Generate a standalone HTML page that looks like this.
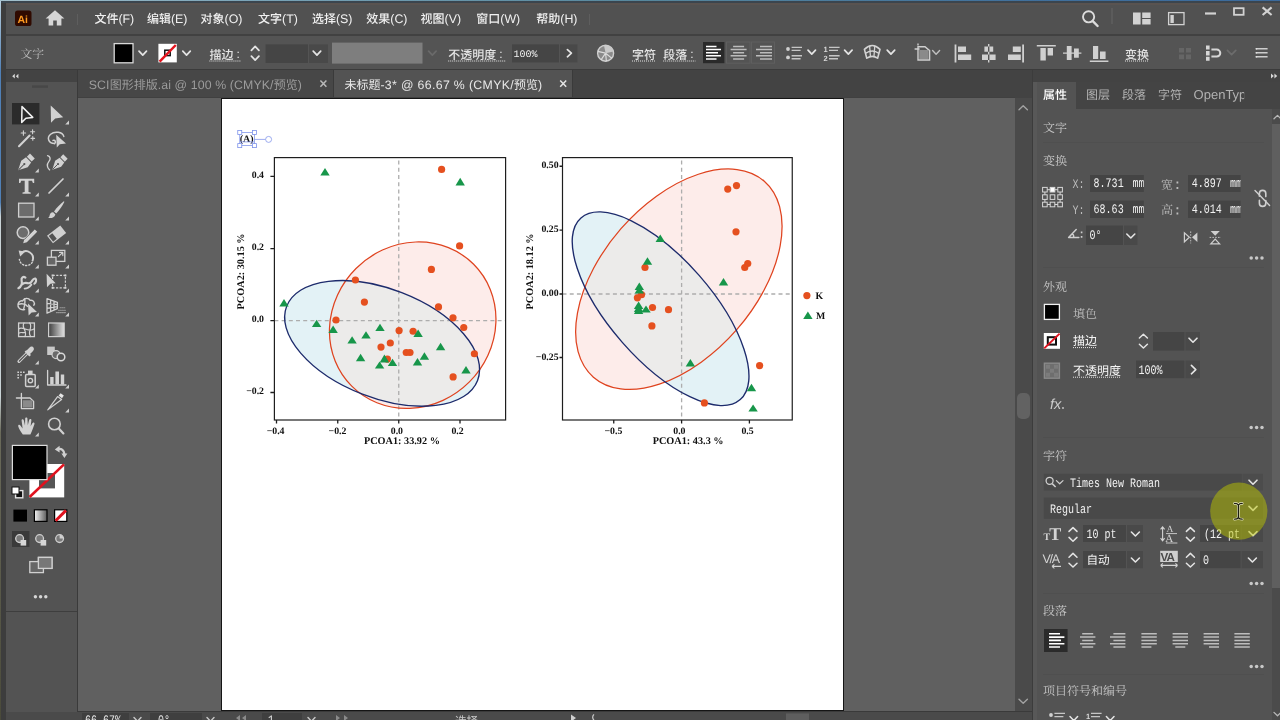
<!DOCTYPE html>
<html lang="zh"><head><meta charset="utf-8"><title>Adobe Illustrator</title>
<style>
html,body{margin:0;padding:0;background:#535353;}
body{width:1280px;height:720px;overflow:hidden;position:relative;font-family:"Liberation Sans",sans-serif;font-size:12px;color:#e6e6e6;}
.a{position:absolute;}
.t{position:absolute;white-space:nowrap;line-height:1;}
.m{font-family:"Liberation Mono",monospace;}

</style></head><body>
<div class="a" style="left:0px;top:0px;width:1280px;height:1.3px;background:linear-gradient(90deg,#a3c0cc 0%,#7aa3b6 20%,#57879c 50%,#41709c 80%,#3c6a9c 100%);"></div>
<div class="a" style="left:0px;top:1.3px;width:1280px;height:1.3px;background:#3b454e;"></div>
<div class="a" style="left:0px;top:2.6px;width:1280px;height:2.4px;background:#595350;"></div>
<div class="a" style="left:0px;top:5px;width:1280px;height:29px;background:#515151;"></div>
<div class="a" style="left:0px;top:34px;width:1280px;height:2px;background:#414141;"></div>
<div class="a" style="left:0px;top:36px;width:1280px;height:33px;background:#545454;"></div>
<div class="a" style="left:0px;top:69px;width:1280px;height:1px;background:#3b3b3b;"></div>
<div class="a" style="left:0px;top:70px;width:1280px;height:28px;background:#434343;"></div>
<div class="a" style="left:6px;top:82px;width:71px;height:630px;background:#535353;"></div>
<div class="a" style="left:6px;top:611px;width:71px;height:1px;background:#3e3e3e;"></div>
<div class="a" style="left:77px;top:70px;width:1px;height:642px;background:#3a3a3a;"></div>
<div class="a" style="left:78px;top:70px;width:255px;height:27px;background:#474747;"></div>
<div class="a" style="left:333px;top:70px;width:1px;height:27px;background:#3a3a3a;"></div>
<div class="a" style="left:334px;top:70px;width:238px;height:28px;background:#535353;"></div>
<div class="a" style="left:572px;top:70px;width:1px;height:27px;background:#3a3a3a;"></div>
<div class="a" style="left:78px;top:98px;width:937px;height:614px;background:#606060;"></div>
<div class="a" style="left:78px;top:97px;width:937px;height:1px;background:#404040;"></div>
<div class="a" style="left:221px;top:98px;width:623px;height:613px;background:#151515;"></div>
<div class="a" style="left:222.2px;top:99px;width:620.6px;height:611px;background:#fff;"></div>
<div class="a" style="left:1015px;top:98px;width:17px;height:614px;background:#4a4a4a;"></div>
<div class="a" style="left:1017px;top:393px;width:13px;height:26px;background:#626262;border-radius:5px;"></div>
<div class="a" style="left:1032px;top:70px;width:248px;height:650px;background:#535353;"></div>
<div class="a" style="left:1032px;top:70px;width:248px;height:12px;background:#434343;"></div>
<div class="a" style="left:1032px;top:70px;width:1px;height:650px;background:#3c3c3c;"></div>
<div class="a" style="left:1033px;top:82px;width:4px;height:638px;background:#585858;"></div>
<div class="a" style="left:1076px;top:82px;width:204px;height:27px;background:#444444;"></div>
<div class="a" style="left:1272px;top:109px;width:8px;height:611px;background:#4b4b4b;"></div>
<div class="a" style="left:1272px;top:124px;width:8px;height:464px;background:#5f5f5f;"></div>
<div class="a" style="left:6px;top:712px;width:1026px;height:8px;background:#4a4a4a;"></div>
<div class="a" style="left:78px;top:711px;width:954px;height:1px;background:#3a3a3a;"></div>
<div class="a" style="left:0px;top:1.4px;width:1.2px;height:718.6px;background:linear-gradient(180deg,#b9d0de 0%,#4f7fb5 10%,#4f7fb5 28%,#c9d3d6 30%,#c9d3d6 55%,#6a6a5a 60%,#4a4a3a 100%);"></div>
<div class="a" style="left:1.2px;top:2.6px;width:4.6px;height:717.4px;background:#3d3d3d;"></div>
<svg id="ov" width="1280" height="720" viewBox="0 0 1280 720" style="position:absolute;left:0;top:0;will-change:transform;text-rendering:geometricPrecision"><clipPath id="cpL"><ellipse cx="412.7" cy="325.2" rx="86.2" ry="80.2" transform="rotate(-45 412.7 325.2)" /></clipPath><ellipse cx="412.7" cy="325.2" rx="86.2" ry="80.2" transform="rotate(-45 412.7 325.2)" fill="#fdecea"/><ellipse cx="382.1" cy="343.4" rx="102.4" ry="54.4" transform="rotate(21.2 382.1 343.4)" fill="#e3f2f6"/><g clip-path="url(#cpL)"><ellipse cx="382.1" cy="343.4" rx="102.4" ry="54.4" transform="rotate(21.2 382.1 343.4)" fill="#ecebea"/></g><path d="M398.75 160.6V420M274.4 320.6H505.6" stroke="#adadad" stroke-width="1.3" stroke-dasharray="4 3.2" fill="none"/><ellipse cx="412.7" cy="325.2" rx="86.2" ry="80.2" transform="rotate(-45 412.7 325.2)" fill="none" stroke="#df431f" stroke-width="1.25"/><ellipse cx="382.1" cy="343.4" rx="102.4" ry="54.4" transform="rotate(21.2 382.1 343.4)" fill="none" stroke="#1d2b6c" stroke-width="1.35"/><g fill="#e5501f"><circle cx="441.6" cy="169.4" r="3.6"/><circle cx="459.6" cy="245.9" r="3.6"/><circle cx="431.4" cy="269.4" r="3.6"/><circle cx="355.4" cy="280" r="3.6"/><circle cx="364.4" cy="302.1" r="3.6"/><circle cx="438.5" cy="306.9" r="3.6"/><circle cx="453" cy="317.8" r="3.6"/><circle cx="336" cy="320" r="3.6"/><circle cx="463.75" cy="327.5" r="3.6"/><circle cx="399.1" cy="330.6" r="3.6"/><circle cx="413.1" cy="331.25" r="3.6"/><circle cx="390.3" cy="343" r="3.6"/><circle cx="381" cy="347.1" r="3.6"/><circle cx="406.25" cy="352.5" r="3.6"/><circle cx="410" cy="352.5" r="3.6"/><circle cx="474.4" cy="353.75" r="3.6"/><circle cx="387.4" cy="359.1" r="3.6"/><circle cx="453.1" cy="376.9" r="3.6"/></g><g fill="#17964a"><path d="M320.30 175.60L329.70 175.60L325.00 168.10Z"/><path d="M455.50 185.60L464.90 185.60L460.20 177.75Z"/><path d="M279.30 306.50L288.70 306.50L284.00 299.00Z"/><path d="M311.90 326.90L321.30 326.90L316.60 319.75Z"/><path d="M328.40 332.90L337.80 332.90L333.10 325.60Z"/><path d="M375.30 331.00L384.70 331.00L380.00 323.75Z"/><path d="M361.30 338.50L370.70 338.50L366.00 331.25Z"/><path d="M347.40 343.50L356.80 343.50L352.10 336.25Z"/><path d="M413.40 336.90L422.80 336.90L418.10 329.40Z"/><path d="M435.90 350.25L445.30 350.25L440.60 342.75Z"/><path d="M355.90 361.25L365.30 361.25L360.60 353.75Z"/><path d="M379.70 362.40L389.10 362.40L384.40 354.40Z"/><path d="M374.90 368.60L384.30 368.60L379.60 361.50Z"/><path d="M387.80 366.00L397.20 366.00L392.50 358.75Z"/><path d="M419.70 359.75L429.10 359.75L424.40 352.25Z"/><path d="M412.80 365.60L422.20 365.60L417.50 358.10Z"/><path d="M461.30 373.50L470.70 373.50L466.00 366.00Z"/></g><rect x="274.4" y="157.6" width="231.20000000000005" height="262.4" fill="none" stroke="#1e1e1e" stroke-width="1.2"/><clipPath id="cpR"><ellipse cx="678.85" cy="279.2" rx="130" ry="76.8" transform="rotate(-48.9 678.85 279.2)" /></clipPath><ellipse cx="678.85" cy="279.2" rx="130" ry="76.8" transform="rotate(-48.9 678.85 279.2)" fill="#fdecea"/><ellipse cx="660.6" cy="308.75" rx="120.8" ry="50.95" transform="rotate(48.75 660.6 308.75)" fill="#e3f2f6"/><g clip-path="url(#cpR)"><ellipse cx="660.6" cy="308.75" rx="120.8" ry="50.95" transform="rotate(48.75 660.6 308.75)" fill="#ecebea"/></g><path d="M681.6 160.6V420M562.5 294H792.25" stroke="#adadad" stroke-width="1.3" stroke-dasharray="4 3.2" fill="none"/><ellipse cx="678.85" cy="279.2" rx="130" ry="76.8" transform="rotate(-48.9 678.85 279.2)" fill="none" stroke="#df431f" stroke-width="1.25"/><ellipse cx="660.6" cy="308.75" rx="120.8" ry="50.95" transform="rotate(48.75 660.6 308.75)" fill="none" stroke="#1d2b6c" stroke-width="1.35"/><g fill="#e5501f"><circle cx="727.75" cy="189.1" r="3.6"/><circle cx="736.5" cy="185.6" r="3.6"/><circle cx="736" cy="231.8" r="3.6"/><circle cx="747.75" cy="263.5" r="3.6"/><circle cx="744.75" cy="267.5" r="3.6"/><circle cx="645" cy="267.5" r="3.6"/><circle cx="641.5" cy="294.7" r="3.6"/><circle cx="637.4" cy="297.8" r="3.6"/><circle cx="652.5" cy="307.5" r="3.6"/><circle cx="668.5" cy="309.7" r="3.6"/><circle cx="651.9" cy="325.9" r="3.6"/><circle cx="759.6" cy="365.6" r="3.6"/><circle cx="704.4" cy="402.9" r="3.6"/></g><g fill="#17964a"><path d="M655.55 241.90L664.95 241.90L660.25 234.40Z"/><path d="M642.80 264.75L652.20 264.75L647.50 257.25Z"/><path d="M634.60 290.00L644.00 290.00L639.30 282.50Z"/><path d="M634.60 293.50L644.00 293.50L639.30 286.00Z"/><path d="M633.90 309.00L643.30 309.00L638.60 301.60Z"/><path d="M633.90 312.00L643.30 312.00L638.60 304.50Z"/><path d="M633.90 313.90L643.30 313.90L638.60 306.50Z"/><path d="M641.30 312.40L650.70 312.40L646.00 305.40Z"/><path d="M718.80 285.60L728.20 285.60L723.50 278.10Z"/><path d="M685.70 366.50L695.10 366.50L690.40 359.00Z"/><path d="M746.80 391.25L756.20 391.25L751.50 383.75Z"/><path d="M748.40 411.50L757.80 411.50L753.10 404.40Z"/></g><rect x="562.5" y="157.6" width="229.75" height="262.4" fill="none" stroke="#1e1e1e" stroke-width="1.2"/><circle cx="806.9" cy="295.6" r="3.6" fill="#e5501f"/><g fill="#17964a"><path d="M803.20 319.00L812.60 319.00L807.90 311.50Z"/></g><path d="M270.4 176.4H274.4M270.4 248.6H274.4M270.4 320.6H274.4M270.4 392.5H274.4M276.5 420V423.4M337.75 420V423.4M398.75 420V423.4M460 420V423.4M559.5 166.25H562.5M559.5 230.1H562.5M559.5 294H562.5M559.5 357.5H562.5M613.75 420V423.4M681.6 420V423.4M749.4 420V423.4" stroke="#1e1e1e" stroke-width="1.3" fill="none"/><g style="font-family:Liberation Serif,serif;font-weight:bold;white-space:pre" fill="#111"><text x="264" y="178.0" font-size="9.8" text-anchor="end" >0.4</text><text x="264" y="250.2" font-size="9.8" text-anchor="end" >0.2</text><text x="264" y="322.20000000000005" font-size="9.8" text-anchor="end" >0.0</text><text x="264" y="394.1" font-size="9.8" text-anchor="end" >−0.2</text><text x="275.6" y="433.5" font-size="9.8" text-anchor="middle" >−0.4</text><text x="337.5" y="433.5" font-size="9.8" text-anchor="middle" >−0.2</text><text x="396.9" y="433.5" font-size="9.8" text-anchor="middle" >0.0</text><text x="457.5" y="433.5" font-size="9.8" text-anchor="middle" >0.2</text><text x="558.6" y="168.45" font-size="9.8" text-anchor="end" >0.50</text><text x="558.6" y="232.29999999999998" font-size="9.8" text-anchor="end" >0.25</text><text x="558.6" y="296.2" font-size="9.8" text-anchor="end" >0.00</text><text x="558.6" y="359.7" font-size="9.8" text-anchor="end" >−0.25</text><text x="613.4" y="433.5" font-size="9.8" text-anchor="middle" >−0.5</text><text x="679.4" y="433.5" font-size="9.8" text-anchor="middle" >0.0</text><text x="747.5" y="433.5" font-size="9.8" text-anchor="middle" >0.5</text><text x="363.9" y="443.6" font-size="10.25" text-anchor="start" >PCOA1:  33.92 %</text><text x="652.7" y="443.6" font-size="10.25" text-anchor="start" >PCOA1:  43.3 %</text><text font-size="10.25" transform="translate(243.6 309.4) rotate(-90)">PCOA2:  30.15 %</text><text font-size="10.25" transform="translate(532.9 309.4) rotate(-90)">PCOA2:  18.12 %</text><text x="815.6" y="298.8" font-size="9.8" text-anchor="start" >K</text><text x="816" y="318.6" font-size="9.8" text-anchor="start" >M</text><text x="239.7" y="141.6" font-size="10" text-anchor="start" >(A)</text></g><g fill="none" stroke="#7d92ea" stroke-width="0.75"><rect x="239.75" y="132.5" width="14.65" height="13.1"/><path d="M254.4 139.4H265.6M240 141.9H254"/><circle cx="268.6" cy="139.4" r="3" fill="#fff"/></g><g fill="#fff" stroke="#7d92ea" stroke-width="0.8"><rect x="237.75" y="130.5" width="4" height="4"/><rect x="252.4" y="130.5" width="4" height="4"/><rect x="237.75" y="143.6" width="4" height="4"/><rect x="252.4" y="143.6" width="4" height="4"/></g><rect x="15" y="10.5" width="16.5" height="15.5" rx="2.6" fill="#300a00"/><text x="17.6" y="22.6" font-size="10.5" fill="#ff9a1f" style="font-family:Liberation Sans,sans-serif;font-weight:bold;letter-spacing:-0.3px">Ai</text><path d="M55 10.2L45.6 18.6H48.6V25.6H53.2V20.6H56.8V25.6H61.4V18.6H64.4Z" fill="#d6d6d6"/><text x="94.40" y="22.60" font-size="12" fill="#f0f0f0" style="font-family:'Liberation Sans','Noto Sans CJK SC',sans-serif;font-weight:500">文件</text><text x="118.40" y="22.60" font-size="12.4" fill="#f0f0f0" textLength="15.83" lengthAdjust="spacing" style="font-family:Liberation Sans,sans-serif;font-kerning:none;white-space:pre;letter-spacing:0px">(F)</text><text x="146.90" y="22.60" font-size="12" fill="#f0f0f0" style="font-family:'Liberation Sans','Noto Sans CJK SC',sans-serif;font-weight:500">编辑</text><text x="170.90" y="22.60" font-size="12.4" fill="#f0f0f0" textLength="16.53" lengthAdjust="spacing" style="font-family:Liberation Sans,sans-serif;font-kerning:none;white-space:pre;letter-spacing:0px">(E)</text><text x="200.60" y="22.60" font-size="12" fill="#f0f0f0" style="font-family:'Liberation Sans','Noto Sans CJK SC',sans-serif;font-weight:500">对象</text><text x="224.60" y="22.60" font-size="12.4" fill="#f0f0f0" textLength="17.90" lengthAdjust="spacing" style="font-family:Liberation Sans,sans-serif;font-kerning:none;white-space:pre;letter-spacing:0px">(O)</text><text x="258.10" y="22.60" font-size="12" fill="#f0f0f0" style="font-family:'Liberation Sans','Noto Sans CJK SC',sans-serif;font-weight:500">文字</text><text x="282.10" y="22.60" font-size="12.4" fill="#f0f0f0" textLength="15.83" lengthAdjust="spacing" style="font-family:Liberation Sans,sans-serif;font-kerning:none;white-space:pre;letter-spacing:0px">(T)</text><text x="311.90" y="22.60" font-size="12" fill="#f0f0f0" style="font-family:'Liberation Sans','Noto Sans CJK SC',sans-serif;font-weight:500">选择</text><text x="335.90" y="22.60" font-size="12.4" fill="#f0f0f0" textLength="16.53" lengthAdjust="spacing" style="font-family:Liberation Sans,sans-serif;font-kerning:none;white-space:pre;letter-spacing:0px">(S)</text><text x="366.25" y="22.60" font-size="12" fill="#f0f0f0" style="font-family:'Liberation Sans','Noto Sans CJK SC',sans-serif;font-weight:500">效果</text><text x="390.25" y="22.60" font-size="12.4" fill="#f0f0f0" textLength="17.21" lengthAdjust="spacing" style="font-family:Liberation Sans,sans-serif;font-kerning:none;white-space:pre;letter-spacing:0px">(C)</text><text x="420.60" y="22.60" font-size="12" fill="#f0f0f0" style="font-family:'Liberation Sans','Noto Sans CJK SC',sans-serif;font-weight:500">视图</text><text x="444.60" y="22.60" font-size="12.4" fill="#f0f0f0" textLength="16.53" lengthAdjust="spacing" style="font-family:Liberation Sans,sans-serif;font-kerning:none;white-space:pre;letter-spacing:0px">(V)</text><text x="476.25" y="22.60" font-size="12" fill="#f0f0f0" style="font-family:'Liberation Sans','Noto Sans CJK SC',sans-serif;font-weight:500">窗口</text><text x="500.25" y="22.60" font-size="12.4" fill="#f0f0f0" textLength="19.96" lengthAdjust="spacing" style="font-family:Liberation Sans,sans-serif;font-kerning:none;white-space:pre;letter-spacing:0px">(W)</text><text x="536.25" y="22.60" font-size="12" fill="#f0f0f0" style="font-family:'Liberation Sans','Noto Sans CJK SC',sans-serif;font-weight:500">帮助</text><text x="560.25" y="22.60" font-size="12.4" fill="#f0f0f0" textLength="17.21" lengthAdjust="spacing" style="font-family:Liberation Sans,sans-serif;font-kerning:none;white-space:pre;letter-spacing:0px">(H)</text><path d="M77.5 14V25M589.5 14V25" stroke="#5e5e5e" stroke-width="1"/><circle cx="1088.6" cy="16.8" r="5.6" fill="none" stroke="#dcdcdc" stroke-width="1.9"/><path d="M1092.8 21.2L1097.6 26" stroke="#dcdcdc" stroke-width="2.4" stroke-linecap="round"/><path d="M1112 8V24" stroke="#666" stroke-width="1"/><path d="M1133 12.5h7.6v12h-7.6zM1142.2 12.5h8.4v5.4h-8.4zM1142.2 19.1h8.4v5.4h-8.4z" fill="#d2d2d2"/><rect x="1168.6" y="12.6" width="15.4" height="12" fill="none" stroke="#d2d2d2" stroke-width="1.3"/><path d="M1170.4 15h3.4v8h-3.4z" fill="#d2d2d2"/><path d="M1205 12.4h11v2.2h-11z" fill="#d2d2d2"/><rect x="1234" y="8.2" width="9.6" height="6.6" fill="none" stroke="#d2d2d2" stroke-width="1.8"/><path d="M1262.6 7.4L1271.6 15M1271.6 7.4L1262.6 15" stroke="#d2d2d2" stroke-width="2.1"/><text x="20.50" y="58.00" font-size="11.8" fill="#bdbdbd" style="font-family:'Liberation Serif','Noto Serif CJK SC',serif">文字</text><rect x="114.2" y="43.6" width="18.8" height="19.2" fill="#000" stroke="#d9d9d9" stroke-width="1.3"/><path d="M139 51.2l3.75 4l3.75 -4" fill="none" stroke="#e4e4e4" stroke-width="1.7" stroke-linecap="round" stroke-linejoin="round"/><rect x="158.4" y="43.8" width="18.4" height="18.6" fill="#fff"/><rect x="164.8" y="50.2" width="5.4" height="5.4" fill="none" stroke="#111" stroke-width="1.5"/><path d="M159.6 61.6L175.8 45" stroke="#e3141e" stroke-width="2.5"/><path d="M182.8 51.2l3.75 4l3.75 -4" fill="none" stroke="#e4e4e4" stroke-width="1.7" stroke-linecap="round" stroke-linejoin="round"/><text x="209.40" y="58.60" font-size="12" fill="#e4e4e4" style="font-family:'Liberation Sans','Noto Sans CJK SC',sans-serif;font-weight:500">描边</text><text x="236.4" y="58" font-size="12" fill="#e4e4e4" style="font-family:Liberation Sans,sans-serif">:</text><path d="M209.4 61H241" stroke="#e4e4e4" stroke-width="1" stroke-dasharray="1 1" fill="none"/><path d="M251.4 50.4l3.75 -4l3.75 4" fill="none" stroke="#e4e4e4" stroke-width="1.7" stroke-linecap="round" stroke-linejoin="round"/><path d="M251.4 56.2l3.75 4l3.75 -4" fill="none" stroke="#e4e4e4" stroke-width="1.7" stroke-linecap="round" stroke-linejoin="round"/><rect x="265.6" y="44.4" width="42.4" height="18.6" fill="#454545"/><rect x="309" y="44.4" width="19" height="18.6" fill="#494949"/><path d="M313.2 51.2l3.75 4l3.75 -4" fill="none" stroke="#e4e4e4" stroke-width="1.7" stroke-linecap="round" stroke-linejoin="round"/><rect x="332" y="42.6" width="90.5" height="21" fill="#7e7e7e"/><path d="M428.6 51.2l3.75 4l3.75 -4" fill="none" stroke="#6a6a6a" stroke-width="1.7" stroke-linecap="round" stroke-linejoin="round"/><text x="448.20" y="58.60" font-size="12" fill="#e4e4e4" style="font-family:'Liberation Sans','Noto Sans CJK SC',sans-serif;font-weight:500">不透明度</text><text x="499.2" y="58" font-size="12" fill="#e4e4e4" style="font-family:Liberation Sans,sans-serif">:</text><path d="M448.2 61H505.6" stroke="#e4e4e4" stroke-width="1" stroke-dasharray="1 1" fill="none"/><rect x="512" y="44.4" width="47" height="18" fill="#454545"/><rect x="560" y="44.4" width="17.4" height="18" fill="#494949"/><text x="513.6" y="56.6" font-size="10" fill="#f0f0f0" style="font-family:Liberation Mono,monospace">100%</text><path d="M567.4 49.6l4 3.6l-4 3.6" fill="none" stroke="#e4e4e4" stroke-width="1.7" stroke-linecap="round" stroke-linejoin="round"/><circle cx="605.6" cy="53.2" r="8" fill="#8a8a8a" stroke="#cfcfcf" stroke-width="1.4"/><path d="M605.6 53.2L597.8 51.4M605.6 53.2L601 60M605.6 53.2L606.4 61.2M605.6 53.2L612 58.4" stroke="#dcdcdc" stroke-width="1.2"/><path d="M605.6 53.2L604 45.4A8 8 0 0 1 613.4 51.6Z" fill="#c9c9c9"/><text x="632.00" y="58.60" font-size="12" fill="#e4e4e4" style="font-family:'Liberation Sans','Noto Sans CJK SC',sans-serif;font-weight:500">字符</text><path d="M632 61H656" stroke="#e4e4e4" stroke-width="1" stroke-dasharray="1 1" fill="none"/><text x="663.20" y="58.60" font-size="12" fill="#e4e4e4" style="font-family:'Liberation Sans','Noto Sans CJK SC',sans-serif;font-weight:500">段落</text><path d="M663.2 61H695.6" stroke="#e4e4e4" stroke-width="1" stroke-dasharray="1 1" fill="none"/><text x="690.2" y="58" font-size="12" fill="#e4e4e4" style="font-family:Liberation Sans,sans-serif">:</text><rect x="703" y="42" width="21.4" height="21.2" fill="#2a2a2a"/><path d="M706.0 46.50h10.5M706.0 49.60h15M706.0 52.70h12M706.0 55.80h15M706.0 58.90h10.5" stroke="#fff" stroke-width="1.5" fill="none"/><rect x="726.5" y="42" width="23.5" height="21.2" fill="none" stroke="#5f5f5f" stroke-width="1"/><rect x="751.5" y="42" width="23" height="21.2" fill="none" stroke="#5f5f5f" stroke-width="1"/><path d="M733.1 46.50h11M730.6 49.60h16M733.1 52.70h11M730.6 55.80h16M733.1 58.90h11" stroke="#bcbcbc" stroke-width="1.5" fill="none"/><path d="M760.0 46.50h12M756.0 49.60h16M760.0 52.70h12M756.0 55.80h16M760.0 58.90h12" stroke="#bcbcbc" stroke-width="1.5" fill="none"/><circle cx="788" cy="49" r="1.9" fill="#d0d0d0"/><circle cx="788" cy="57.4" r="1.9" fill="#d0d0d0"/><path d="M791.6 47.4h10.4M791.6 50.4h9M791.6 55.8h10.4M791.6 58.8h9" stroke="#c6c6c6" stroke-width="1.4"/><path d="M808 50.2l3.75 4l3.75 -4" fill="none" stroke="#e4e4e4" stroke-width="1.7" stroke-linecap="round" stroke-linejoin="round"/><text x="823.6" y="51.8" font-size="7.5" fill="#d8d8d8" style="font-family:Liberation Sans,sans-serif;font-weight:bold">1</text><text x="823.6" y="60.6" font-size="7.5" fill="#d8d8d8" style="font-family:Liberation Sans,sans-serif;font-weight:bold">2</text><path d="M829 47.4h10.6M829 50.4h9M829 55.8h10.6M829 58.8h9" stroke="#c6c6c6" stroke-width="1.4"/><path d="M844.6 50.2l3.75 4l3.75 -4" fill="none" stroke="#e4e4e4" stroke-width="1.7" stroke-linecap="round" stroke-linejoin="round"/><path d="M864.4 49.4Q872.2 41.6 880 49.4L877.6 58.2Q872.2 54.6 866.8 58.2Z" fill="none" stroke="#d4d4d4" stroke-width="1.6" stroke-linejoin="round"/><path d="M869.6 45.8L870.4 56M874.8 45.8L874 56M865.4 53.4Q872.2 48.6 879 53.4" fill="none" stroke="#d4d4d4" stroke-width="1.3"/><path d="M887.2 50.2l3.75 4l3.75 -4" fill="none" stroke="#e4e4e4" stroke-width="1.7" stroke-linecap="round" stroke-linejoin="round"/><path d="M918 46v14h11.6V50.6L925 46.8H918M914.6 49h5M918 45.6v-2" fill="none" stroke="#cfcfcf" stroke-width="1.4"/><path d="M919.2 50h9.4v9h-9.4z" fill="#8a8a8a"/><path d="M932.6 50.6l3.5 3.6l3.5 -3.6" fill="none" stroke="#c0c0c0" stroke-width="1.4" stroke-linecap="round" stroke-linejoin="round"/><path d="M954.6 44.4h1.8v18h-1.8zM958 46.4h8v5.6h-8zM958 54.4h13.2v5.6H958z" fill="#d0d0d0"/><path d="M988 44v18.6h1.4V44zM984.4 46.4h8.8v5.4h-8.8zM982 54.6h13.6V60H982z" fill="#d0d0d0"/><path d="M1022.2 44.4h1.8v18h-1.8zM1012.8 46.4h8v5.6h-8zM1008 54.4h12.8v5.6H1008z" fill="#d0d0d0"/><path d="M1036.8 45h19v1.6h-19zM1040.4 48h5.4v12.6h-5.4zM1047.6 48h5.4v7.6h-5.4z" fill="#d0d0d0"/><path d="M1063 52.4h18.4v1.4H1063zM1066.8 46h4.8v14h-4.8zM1074 48.4h4.8v9.4H1074z" fill="#d0d0d0"/><path d="M1089.8 60.4h18.6V62h-18.6zM1093 46h5.2v13h-5.2zM1100 51.4h5.6V59H1100z" fill="#d0d0d0"/><text x="1125.00" y="58.60" font-size="12" fill="#e4e4e4" style="font-family:'Liberation Sans','Noto Sans CJK SC',sans-serif;font-weight:500">变换</text><path d="M1125 61H1149" stroke="#e4e4e4" stroke-width="1" stroke-dasharray="1 1" fill="none"/><path d="M1179 48h5v4.6h-5zM1186 48h5v4.6h-5zM1179 54.6h5v4.6h-5zM1186 54.6h5v4.6h-5z" fill="#666"/><path d="M1206 45.6h3.6v4h-3.6zM1206 51h3.6v4.4h-3.6zM1206 56.8h3.6v4h-3.6z" fill="#d6d6d6"/><path d="M1211.4 49.6h5.4a3.4 3.4 0 0 1 0 7h-5.4" fill="none" stroke="#d6d6d6" stroke-width="2"/><path d="M1227.4 50.4l4.2 4.2l4.2 -4.2" fill="none" stroke="#6c6c6c" stroke-width="1.7" stroke-linecap="round" stroke-linejoin="round"/><path d="M1256 48.8h11.6M1256 52.8h11.6M1256 56.8h11.6" stroke="#cdcdcd" stroke-width="1.5"/><path d="M1255.6 48h1.6v1.6h-1.6zM1255.6 52h1.6v1.6h-1.6zM1255.6 56h1.6v1.6h-1.6z" fill="#e0e0e0"/><path d="M12.2 76.2l2.6-2.4v4.8zM15.8 76.2l2.6-2.4v4.8z" fill="#d8d8d8"/><path d="M1271 73.6l2.8 2.4l-2.8 2.4zM1274.4 73.6l2.8 2.4l-2.8 2.4z" fill="#d8d8d8"/><path d="M32 86.6h16" stroke="#474747" stroke-width="2.4"/><text x="88.75" y="89.40" font-size="12.3" fill="#9c9c9c" textLength="20.89" lengthAdjust="spacing" style="font-family:Liberation Sans,sans-serif;font-kerning:none;white-space:pre;letter-spacing:0.13px">SCI</text><text x="109.64" y="89.40" font-size="12" fill="#9c9c9c" style="font-family:'Liberation Sans','Noto Sans CJK SC',sans-serif">图形排版</text><text x="157.64" y="89.40" font-size="12.3" fill="#9c9c9c" textLength="115.99" lengthAdjust="spacing" style="font-family:Liberation Sans,sans-serif;font-kerning:none;white-space:pre;letter-spacing:0.13px">.ai @ 100 % (CMYK/</text><text x="273.64" y="89.40" font-size="12" fill="#9c9c9c" style="font-family:'Liberation Sans','Noto Sans CJK SC',sans-serif">预览</text><text x="297.64" y="89.40" font-size="12.3" fill="#9c9c9c" style="font-family:Liberation Sans,sans-serif;font-kerning:none;white-space:pre;letter-spacing:0.13px">)</text><path d="M320.4 80.4l6 6.4M326.4 80.4l-6 6.4" stroke="#b8b8b8" stroke-width="1.5"/><text x="344.40" y="89.40" font-size="12" fill="#e8e8e8" style="font-family:'Liberation Sans','Noto Sans CJK SC',sans-serif">未标题</text><text x="380.40" y="89.40" font-size="12.3" fill="#e8e8e8" textLength="133.65" lengthAdjust="spacing" style="font-family:Liberation Sans,sans-serif;font-kerning:none;white-space:pre;letter-spacing:0.35px">-3* @ 66.67 % (CMYK/</text><text x="514.05" y="89.40" font-size="12" fill="#e8e8e8" style="font-family:'Liberation Sans','Noto Sans CJK SC',sans-serif">预览</text><text x="538.05" y="89.40" font-size="12.3" fill="#e8e8e8" style="font-family:Liberation Sans,sans-serif;font-kerning:none;white-space:pre;letter-spacing:0.35px">)</text><path d="M560.2 80.4l6 6.4M566.2 80.4l-6 6.4" stroke="#e4e4e4" stroke-width="1.5"/><path d="M1019 109.8l4.2 -4l4.2 4" fill="none" stroke="#a2a2a2" stroke-width="1.4" stroke-linecap="round" stroke-linejoin="round"/><path d="M1019 699.2l4.2 4l4.2 -4" fill="none" stroke="#a2a2a2" stroke-width="1.4" stroke-linecap="round" stroke-linejoin="round"/><rect x="12" y="103" width="27.4" height="21.4" fill="#2b2b2b"/><path d="M22 106.6L21.7 122.4L25.9 118.2L32.8 117.4Z" fill="none" stroke="#f2f2f2" stroke-width="1.5" stroke-linecap="round" stroke-linejoin="round" /><path d="M50.7 105.4L51 122.8L55.2 118.6L63.2 117.3Z" fill="#d2d2d2" /><path d="M69 120.6v3.8h-3.8z" fill="#cfcfcf"/><path d="M19 146.2L29.6 135.6" fill="none" stroke="#d2d2d2" stroke-width="2.1" stroke-linecap="round" stroke-linejoin="round" /><path d="M23.4 130.8v4.4M21.2 133h4.4M32.6 129.8v4M30.6 131.8h4M32.8 136.6v3.6M31 138.4h3.6" fill="none" stroke="#d2d2d2" stroke-width="1.1" stroke-linecap="round" stroke-linejoin="round" /><path d="M54.6 143.6C48 143.4 46.8 137.4 50.6 134.2C54.6 130.8 62.6 131.8 63.8 136.4M54.6 143.6C56.4 141.8 55 139.6 53 140.4" fill="none" stroke="#d2d2d2" stroke-width="1.5" stroke-linecap="round" stroke-linejoin="round" /><path d="M56.2 134.8L56.8 147.4L59.8 144.2L66 143.6Z" fill="#d2d2d2" /><g transform="translate(25.6 162.8) rotate(45) scale(1.0)"><path d="M-3.4 -9.6h6.8v4.4h-6.8z" fill="#d2d2d2"/><path d="M-3.6 -4.2h7.2L4.6 1.6L0 10.6L-4.6 1.6Z" fill="#d2d2d2"/><path d="M0 10V2.4" stroke="#535353" stroke-width="1"/><circle cx="0" cy="1.8" r="1.1" fill="#535353"/></g><path d="M38.8 168.6v3.8h-3.8z" fill="#cfcfcf"/><g transform="translate(59.2 162.8) rotate(45) scale(0.92)"><path d="M-3.4 -9.6h6.8v4.4h-6.8z" fill="#d2d2d2"/><path d="M-3.6 -4.2h7.2L4.6 1.6L0 10.6L-4.6 1.6Z" fill="#d2d2d2"/><path d="M0 10V2.4" stroke="#535353" stroke-width="1"/><circle cx="0" cy="1.8" r="1.1" fill="#535353"/></g><path d="M47.6 155.6C50.6 156.4 50.8 159.4 48.8 161.6C46.6 164.2 47 168 49.6 169.8" fill="none" stroke="#d2d2d2" stroke-width="1.4" stroke-linecap="round" stroke-linejoin="round" /><path d="M19 178.8h15.2v4.2h-1.3l-.9-2.3h-3.5v11.3l2.2.6v1.2h-8.2v-1.2l2.2-.6v-11.3h-3.5l-.9 2.3H19z" fill="#d2d2d2" /><path d="M38.8 192.6v3.8h-3.8z" fill="#cfcfcf"/><path d="M49 193L63 179" fill="none" stroke="#d2d2d2" stroke-width="1.7" stroke-linecap="round" stroke-linejoin="round" /><path d="M69 192.6v3.8h-3.8z" fill="#cfcfcf"/><rect x="18.6" y="203.2" width="15.4" height="13.8" fill="#6c6c6c" stroke="#d0d0d0" stroke-width="1.3"/><path d="M38.8 216.6v3.8h-3.8z" fill="#cfcfcf"/><path d="M63.8 201.2C61 203.4 56.6 207.6 54 211.4L56.2 213.4C59.6 210.4 62.6 205.6 64.4 201.8Z" fill="#d2d2d2" /><path d="M53.2 212.2C51 212 49.8 213.8 49.6 215.6C49.5 216.8 48.8 217.4 48.2 217.8C50.6 218.6 54.4 218 55.4 214.4Z" fill="#d2d2d2" /><path d="M69 216.6v3.8h-3.8z" fill="#cfcfcf"/><circle cx="23" cy="232.6" r="5.8" fill="#6c6c6c" stroke="#d0d0d0" stroke-width="1.5"/><path d="M24.2 239.6L34.6 229.2L37.2 231.8L26.8 242.2L23.2 243.2Z" fill="#d2d2d2" /><path d="M24.2 239.6L34.6 229.2" stroke="#535353" stroke-width="0.8"/><path d="M38.8 240.6v3.8h-3.8z" fill="#cfcfcf"/><g transform="translate(56.6 234.4) rotate(-38)"><path d="M-8.4 -4.8h16.8v9.6h-16.8z" fill="#d0d0d0"/><path d="M-7.2 -3.6h4.6v7.2h-4.6z" fill="#535353"/></g><path d="M69 240.6v3.8h-3.8z" fill="#cfcfcf"/><path d="M21.4 253A7 7 0 0 1 32.6 260.6" fill="none" stroke="#d2d2d2" stroke-width="1.9" stroke-linecap="round" stroke-linejoin="round" /><path d="M32.2 262.4A7 7 0 0 1 19.4 259.4" fill="none" stroke="#d2d2d2" stroke-width="1.4" stroke-linecap="round" stroke-linejoin="round" stroke-dasharray="1.2 2"/><path d="M18.6 250.6L25.2 251.6L20.2 256.6Z" fill="#d2d2d2" /><path d="M38.8 264.6v3.8h-3.8z" fill="#cfcfcf"/><rect x="51.4" y="250.4" width="13.4" height="11" fill="none" stroke="#d0d0d0" stroke-width="1.3"/><rect x="47.4" y="257.2" width="8.6" height="8" fill="#666" stroke="#d0d0d0" stroke-width="1.3"/><path d="M58.4 256.6L62.6 252.6M59.6 252.4h3.2v3.2" fill="none" stroke="#d2d2d2" stroke-width="1.2" stroke-linecap="round" stroke-linejoin="round" /><path d="M69 264.6v3.8h-3.8z" fill="#cfcfcf"/><path d="M18.4 288.2C21.4 286.4 22.4 283.6 21.6 280.4C21 277.8 23.4 276 25.4 277.6M22 284.6C25.4 280.8 28.4 284.8 30.6 282.6C32.6 280.6 33 277.8 35.4 278.6C36.6 279.4 36.2 282.4 34.4 283.6" fill="none" stroke="#d2d2d2" stroke-width="2.2" stroke-linecap="round" stroke-linejoin="round" /><path d="M24.6 288.6C27.8 288.6 30 286.4 31.4 284.6" fill="none" stroke="#d2d2d2" stroke-width="1.8" stroke-linecap="round" stroke-linejoin="round" /><path d="M38.8 288.6v3.8h-3.8z" fill="#cfcfcf"/><rect x="52.6" y="275.4" width="12.8" height="12.4" fill="none" stroke="#d0d0d0" stroke-width="1.2" stroke-dasharray="2.2 1.4"/><path d="M46.6 273.8L47 287.2L50.4 283.8L55.6 283.2Z" fill="#d2d2d2" /><path d="M51.6 274.4h2v2h-2zM64.4 274.4h2v2h-2zM64.4 286.8h2v2h-2zM51.6 286.8h2v2h-2z" fill="#d2d2d2" /><path d="M69 288.6v3.8h-3.8z" fill="#cfcfcf"/><path d="M24.6 309.6C20.2 310.4 17.4 307.8 18 304.2C18.6 300.8 22 300.6 22.6 301C23.6 298 28.6 297.4 30.2 300.4C33.6 299.8 35.4 303.2 33.8 305.2M18.4 304.4C22.6 303 26.4 304.4 27.4 306.4M24.6 298.6C25.4 302 24.6 306 23.6 309.4" fill="none" stroke="#d2d2d2" stroke-width="1.4" stroke-linecap="round" stroke-linejoin="round" /><path d="M28 303.4L28.6 315.6L31.6 312.6L37 312Z" fill="#d2d2d2" /><path d="M38.8 312.6v3.8h-3.8z" fill="#cfcfcf"/><path d="M47 298.6L47 313.2L57.4 308.6V302.4ZM50.6 300V311.6M54 301.2V310M47 303.4L57.4 304.6M47 308.4L57.4 306.6" fill="none" stroke="#d2d2d2" stroke-width="1.3" stroke-linecap="round" stroke-linejoin="round" /><path d="M56.4 312.6H66M58.4 310.2H65.4M60 307.8H64.8" fill="none" stroke="#9a9a9a" stroke-width="1.1" stroke-linecap="round" stroke-linejoin="round" stroke-dasharray="1 1"/><path d="M69 312.6v3.8h-3.8z" fill="#cfcfcf"/><rect x="18.6" y="323" width="15.8" height="13.6" fill="none" stroke="#d0d0d0" stroke-width="1.3"/><path d="M18.6 329C23 325.4 28 333.4 34.4 328.8M24 323C20.6 328 28.4 331 24.8 336.6M29.6 323C33.4 327 26.6 332 30.8 336.6M18.6 333.4C21 331.4 23 333.4 25.4 332.4" fill="none" stroke="#d2d2d2" stroke-width="1.2" stroke-linecap="round" stroke-linejoin="round" /><linearGradient id="tg1" x1="0" x2="1" y1="0" y2="0"><stop offset="0" stop-color="#3e3e3e"/><stop offset="1" stop-color="#e2e2e2"/></linearGradient><rect x="48.6" y="323" width="15.6" height="13.6" fill="url(#tg1)" stroke="#cfcfcf" stroke-width="1.2"/><path d="M19 361.4L28 352.4" fill="none" stroke="#d0d0d0" stroke-width="3.2" stroke-linecap="round" stroke-linejoin="round" /><path d="M19.4 361L28 352.4" stroke="#535353" stroke-width="1.2" stroke-linecap="round"/><path d="M26.6 350.4L29.6 347.4C31 346 33.4 346.6 33.8 348.2C34.2 349.6 33.4 350.6 32.6 351.4L30 354L31 355L29.4 356.6L24.6 351.8L26.2 350.2Z" fill="#d2d2d2" /><path d="M38.8 360.6v3.8h-3.8z" fill="#cfcfcf"/><rect x="47.2" y="346.6" width="7.6" height="8.4" fill="#c8c8c8"/><circle cx="56" cy="354.6" r="4" fill="#6a6a6a" stroke="#d0d0d0" stroke-width="1.2"/><circle cx="61" cy="357" r="3.8" fill="#535353" stroke="#d8d8d8" stroke-width="1.5"/><rect x="25.6" y="374.6" width="9.6" height="11.8" rx="1" fill="none" stroke="#d0d0d0" stroke-width="1.5"/><rect x="28" y="370.6" width="4.6" height="3.4" fill="#d0d0d0"/><circle cx="30.4" cy="380.6" r="2.2" fill="none" stroke="#d0d0d0" stroke-width="1.4"/><path d="M17.4 371.4h1.6v1.6h-1.6zM20.2 371.4h1.6v1.6h-1.6zM23 371.4h1.6v1.6H23zM17.4 374.2h1.6v1.6h-1.6zM20.2 374.2h1.6v1.6h-1.6zM17.4 377h1.6v1.6h-1.6z" fill="#d2d2d2" /><path d="M38.8 384.6v3.8h-3.8z" fill="#cfcfcf"/><path d="M47.6 370.4V385H66" fill="none" stroke="#d2d2d2" stroke-width="1.3" stroke-linecap="round" stroke-linejoin="round" /><path d="M50.2 377h3.4v7.4h-3.4zM55.4 371.4h3.6v13h-3.6zM60.8 374.4h3.4v10h-3.4z" fill="#d2d2d2" /><path d="M69 384.6v3.8h-3.8z" fill="#cfcfcf"/><path d="M16.4 398h6M21.4 393.4V408.6H33.6V401.4L30 398H22" fill="none" stroke="#d2d2d2" stroke-width="1.3" stroke-linecap="round" stroke-linejoin="round" /><path d="M22.8 400.2h9.6v7.2h-9.6z" fill="#8a8a8a" /><path d="M47.8 409.8L57.6 396.6L61.6 399.6Z" fill="none" stroke="#d2d2d2" stroke-width="1.2" stroke-linecap="round" stroke-linejoin="round" /><path d="M58.6 395.6L60.6 393.2L63.8 395.6L62 398.2Z" fill="#e6e6e6"/><path d="M69 408.6v3.8h-3.8z" fill="#cfcfcf"/><path d="M22.8 434.4C20.6 431.6 19 428.6 18.2 426.2C17.8 424.8 19.6 424.2 20.4 425.4L22.6 428.4L21.6 420.6C21.4 419.2 23.4 418.8 23.8 420.2L25 425.4L25.2 418.6C25.2 417.2 27.4 417.2 27.4 418.6L27.8 425.2L29.2 419.8C29.6 418.4 31.6 418.8 31.4 420.2L30.6 426.2L32.4 423.2C33.2 422 35 422.8 34.4 424.2C33.4 426.8 32.2 431 30.4 434.4Z" fill="#d2d2d2" /><path d="M38.8 432.6v3.8h-3.8z" fill="#cfcfcf"/><circle cx="54.4" cy="424" r="5.8" fill="none" stroke="#d0d0d0" stroke-width="1.6"/><path d="M58.8 428.6L63.4 433.4" stroke="#d0d0d0" stroke-width="2.2" stroke-linecap="round"/><rect x="29.4" y="464" width="34.8" height="33.4" fill="#fff"/><rect x="39" y="473" width="16" height="15.4" fill="#565656"/><path d="M29.6 497L64 464.4" stroke="#e0121e" stroke-width="2.6"/><rect x="12.4" y="445.4" width="34.6" height="34.2" fill="#000" stroke="#dcdcdc" stroke-width="1.2"/><path d="M58 449C61.4 448.2 64.2 450.4 64.4 454.2" fill="none" stroke="#cfcfcf" stroke-width="2.3" stroke-linecap="round" stroke-linejoin="round" /><path d="M54.8 449.6L59.6 445.8V452.4ZM61.4 453.4L67.4 453.6L64.4 458Z" fill="#cfcfcf" /><rect x="15.6" y="490.6" width="7.2" height="7.2" fill="#111" stroke="#e4e4e4" stroke-width="1.4"/><rect x="12" y="487" width="7" height="7" fill="#fff" stroke="#111" stroke-width="1"/><rect x="13.4" y="509.6" width="13.6" height="12" fill="#000"/><linearGradient id="tg2" x1="0" x2="1" y1="0" y2="0"><stop offset="0" stop-color="#f4f4f4"/><stop offset="1" stop-color="#5a5a5a"/></linearGradient><rect x="34.4" y="509.8" width="12.6" height="11.6" fill="url(#tg2)" stroke="#000" stroke-width="1.2"/><rect x="54.6" y="509.8" width="12.2" height="11.6" fill="#fff" stroke="#000" stroke-width="1.2"/><path d="M55.6 520.8L66 510.4" stroke="#e0121e" stroke-width="2.9"/><rect x="12" y="531" width="17.4" height="16" fill="#3a3a3a"/><circle cx="19.6" cy="538.6" r="3.9" fill="#7a7a7a" stroke="#cfcfcf" stroke-width="1.3"/><rect x="20.6" y="540" width="5.6" height="5.6" fill="#d6d6d6"/><circle cx="39.6" cy="538.6" r="3.9" fill="#7a7a7a" stroke="#cfcfcf" stroke-width="1.3"/><rect x="40.6" y="540" width="5.6" height="5.6" fill="#d6d6d6"/><circle cx="59.6" cy="538.6" r="3.9" fill="#7a7a7a" stroke="#cfcfcf" stroke-width="1.3"/><path d="M59.6 538.6h3.9a3.9 3.9 0 0 0 -3.9 -3.9z" fill="#cfcfcf"/><rect x="38.4" y="557.4" width="13.6" height="11" fill="#777" stroke="#d0d0d0" stroke-width="1.3"/><rect x="29.8" y="561.6" width="13.6" height="11" fill="#666" stroke="#d0d0d0" stroke-width="1.3"/><rect x="38.4" y="557.4" width="13.6" height="11" fill="#777" stroke="#d0d0d0" stroke-width="1.3"/><circle cx="35.4" cy="596.8" r="1.7" fill="#d6d6d6"/><circle cx="40.6" cy="596.8" r="1.7" fill="#d6d6d6"/><circle cx="45.8" cy="596.8" r="1.7" fill="#d6d6d6"/><text x="1043.00" y="99.00" font-size="12" fill="#ffffff" style="font-family:'Liberation Sans','Noto Sans CJK SC',sans-serif;font-weight:500">属性</text><text x="1086.00" y="99.00" font-size="12" fill="#b2b2b2" style="font-family:'Liberation Sans','Noto Sans CJK SC',sans-serif">图层</text><text x="1122.00" y="99.00" font-size="12" fill="#b2b2b2" style="font-family:'Liberation Sans','Noto Sans CJK SC',sans-serif">段落</text><text x="1158.00" y="99.00" font-size="12" fill="#b2b2b2" style="font-family:'Liberation Sans','Noto Sans CJK SC',sans-serif">字符</text><clipPath id="otc"><rect x="1190" y="84" width="54.2" height="24"/></clipPath><text x="1193.6" y="99" font-size="13" fill="#b2b2b2" clip-path="url(#otc)" style="font-family:Liberation Sans,sans-serif">OpenType</text><path d="M1274 118.80000000000001l3.5 -3.4l3.5 3.4" fill="none" stroke="#b8b8b8" stroke-width="1.3" stroke-linecap="round" stroke-linejoin="round"/><path d="M1274 712.4l3.5 3.4l3.5 -3.4" fill="none" stroke="#b8b8b8" stroke-width="1.3" stroke-linecap="round" stroke-linejoin="round"/><text x="1043.00" y="131.60" font-size="12" fill="#c6c6c6" style="font-family:'Liberation Serif','Noto Serif CJK SC',serif">文字</text><text x="1043.00" y="165.00" font-size="12" fill="#c6c6c6" style="font-family:'Liberation Serif','Noto Serif CJK SC',serif">变换</text><text x="1043.00" y="290.60" font-size="12" fill="#c6c6c6" style="font-family:'Liberation Serif','Noto Serif CJK SC',serif">外观</text><text x="1043.00" y="460.00" font-size="12" fill="#c6c6c6" style="font-family:'Liberation Serif','Noto Serif CJK SC',serif">字符</text><text x="1043.00" y="615.20" font-size="12" fill="#c6c6c6" style="font-family:'Liberation Serif','Noto Serif CJK SC',serif">段落</text><text x="1043.00" y="694.60" font-size="12" fill="#c6c6c6" style="font-family:'Liberation Serif','Noto Serif CJK SC',serif">项目符号和编号</text><path d="M1043 142.5H1264" stroke="#4f4f4f" stroke-width="1"/><path d="M1043 267.5H1264" stroke="#4f4f4f" stroke-width="1"/><path d="M1043 437.5H1264" stroke="#4f4f4f" stroke-width="1"/><path d="M1043 593.5H1264" stroke="#4f4f4f" stroke-width="1"/><path d="M1043 674.5H1264" stroke="#4f4f4f" stroke-width="1"/><rect x="1042.6" y="187.4" width="4.6" height="4.6" fill="none" stroke="#d8d8d8" stroke-width="1"/><rect x="1050.2" y="187.4" width="4.6" height="4.6" fill="#fff" stroke="#d8d8d8" stroke-width="1"/><rect x="1057.8" y="187.4" width="4.6" height="4.6" fill="none" stroke="#d8d8d8" stroke-width="1"/><rect x="1042.6" y="194.8" width="4.6" height="4.6" fill="none" stroke="#d8d8d8" stroke-width="1"/><rect x="1050.2" y="194.8" width="4.6" height="4.6" fill="none" stroke="#d8d8d8" stroke-width="1"/><rect x="1057.8" y="194.8" width="4.6" height="4.6" fill="none" stroke="#d8d8d8" stroke-width="1"/><rect x="1042.6" y="202.2" width="4.6" height="4.6" fill="none" stroke="#d8d8d8" stroke-width="1"/><rect x="1050.2" y="202.2" width="4.6" height="4.6" fill="none" stroke="#d8d8d8" stroke-width="1"/><rect x="1057.8" y="202.2" width="4.6" height="4.6" fill="none" stroke="#d8d8d8" stroke-width="1"/><path d="M1047.2 189.7h3M1054.8 189.7h3M1047.2 204.5h3M1054.8 204.5h3M1044.9 192v2.8M1044.9 199.4v2.8M1060.1 192v2.8M1060.1 199.4v2.8" stroke="#d8d8d8" stroke-width="1"/><text transform="translate(1072.6 188.4) scale(0.77 1)" font-size="13" fill="#bdbdbd" style="font-family:Liberation Mono,monospace;white-space:pre" >X:</text><text transform="translate(1072.6 214) scale(0.77 1)" font-size="13" fill="#bdbdbd" style="font-family:Liberation Mono,monospace;white-space:pre" >Y:</text><rect x="1090" y="175" width="53.8" height="17" fill="#444444"/><rect x="1090" y="200.6" width="53.8" height="17.4" fill="#444444"/><rect x="1188" y="175" width="52.6" height="17" fill="#444444"/><rect x="1188" y="200.6" width="52.6" height="17.4" fill="#444444"/><clipPath id="f1"><rect x="1090" y="172" width="53.8" height="50"/></clipPath><clipPath id="f2"><rect x="1188" y="172" width="52.6" height="50"/></clipPath><g clip-path="url(#f1)"><text transform="translate(1093.6 187.4) scale(0.77 1)" font-size="13" fill="#f2f2f2" style="font-family:Liberation Mono,monospace;white-space:pre" >8.731</text><text transform="translate(1132.4 187.4) scale(0.77 1)" font-size="13" fill="#f2f2f2" style="font-family:Liberation Mono,monospace;white-space:pre" >mm</text><text transform="translate(1093.6 213.2) scale(0.77 1)" font-size="13" fill="#f2f2f2" style="font-family:Liberation Mono,monospace;white-space:pre" >68.63</text><text transform="translate(1132.4 213.2) scale(0.77 1)" font-size="13" fill="#f2f2f2" style="font-family:Liberation Mono,monospace;white-space:pre" >mm</text></g><g clip-path="url(#f2)"><text transform="translate(1191.8 187.4) scale(0.77 1)" font-size="13" fill="#f2f2f2" style="font-family:Liberation Mono,monospace;white-space:pre" >4.897</text><text transform="translate(1230 187.4) scale(0.77 1)" font-size="13" fill="#f2f2f2" style="font-family:Liberation Mono,monospace;white-space:pre" >mm</text><text transform="translate(1191.8 213.2) scale(0.77 1)" font-size="13" fill="#f2f2f2" style="font-family:Liberation Mono,monospace;white-space:pre" >4.014</text><text transform="translate(1230 213.2) scale(0.77 1)" font-size="13" fill="#f2f2f2" style="font-family:Liberation Mono,monospace;white-space:pre" >mm</text></g><text x="1161.00" y="188.80" font-size="12" fill="#bdbdbd" style="font-family:'Liberation Serif','Noto Serif CJK SC',serif">宽</text><path d="M1177.4 181.60000000000002v2M1177.4 187.0v2" stroke="#bdbdbd" stroke-width="1.8"/><text x="1161.00" y="214.40" font-size="12" fill="#bdbdbd" style="font-family:'Liberation Serif','Noto Serif CJK SC',serif">高</text><path d="M1177.4 207.20000000000002v2M1177.4 212.6v2" stroke="#bdbdbd" stroke-width="1.8"/><g fill="none" stroke="#cfcfcf" stroke-width="1.6" stroke-linecap="round"><path d="M1259.4 196.2v-2.6a3.2 3.2 0 0 1 6.4 0v3M1265.8 200.6v2.6a3.2 3.2 0 0 1 -6.4 0v-3"/><path d="M1255 190.4L1269.6 205.6" stroke-width="1.4"/></g><path d="M1068.6 237.4h10.2M1068.6 237.4L1076.2 229.6M1073.8 237.2A5 5 0 0 0 1072.4 233.6" fill="none" stroke="#cfcfcf" stroke-width="1.5" stroke-linecap="round"/><path d="M1081.6 231.4v1.8M1081.6 236v1.8" stroke="#cfcfcf" stroke-width="1.6"/><rect x="1086" y="225.6" width="37" height="19.4" fill="#454545"/><rect x="1124" y="225.6" width="13.4" height="19.4" fill="#494949"/><text transform="translate(1089.4 239) scale(0.77 1)" font-size="13" fill="#f2f2f2" style="font-family:Liberation Mono,monospace;white-space:pre" >0°</text><path d="M1126.8 234l4.0 4l4.0 -4" fill="none" stroke="#e4e4e4" stroke-width="1.6" stroke-linecap="round" stroke-linejoin="round"/><path d="M1184.4 232.8v9l5-4.5z" fill="none" stroke="#cfcfcf" stroke-width="1.2"/><path d="M1197.4 232.6v9.4l-5.4-4.7z" fill="#cfcfcf"/><path d="M1190.7 231.4v12" stroke="#bdbdbd" stroke-width="1" stroke-dasharray="1.6 1.2"/><path d="M1210.6 231h9.2l-4.6 4.8z" fill="#cfcfcf"/><path d="M1210.8 243.8h8.8l-4.4-4.6z" fill="none" stroke="#cfcfcf" stroke-width="1.2"/><path d="M1209.6 237.4h11.4" stroke="#bdbdbd" stroke-width="1" stroke-dasharray="1.6 1.2"/><circle cx="1251.2" cy="258" r="1.75" fill="#c8c8c8"/><circle cx="1256.6000000000001" cy="258" r="1.75" fill="#c8c8c8"/><circle cx="1262.0" cy="258" r="1.75" fill="#c8c8c8"/><rect x="1044.4" y="304.4" width="15" height="15" fill="#000" stroke="#f0f0f0" stroke-width="1.3"/><text x="1073.00" y="318.00" font-size="12" fill="#bdbdbd" style="font-family:'Liberation Serif','Noto Serif CJK SC',serif">填色</text><rect x="1043.8" y="333" width="16.2" height="15.8" fill="#fff"/><rect x="1047.8" y="337.2" width="8.2" height="7.4" fill="none" stroke="#111" stroke-width="2"/><path d="M1044.2 348.4L1059.6 333.6" stroke="#e0121e" stroke-width="2"/><text x="1073.00" y="345.00" font-size="12" fill="#f4f4f4" style="font-family:'Liberation Sans','Noto Sans CJK SC',sans-serif">描边</text><path d="M1073 347.6H1096.4" stroke="#e8e8e8" stroke-width="1" stroke-dasharray="1 1" fill="none"/><path d="M1139.4 338.0l4.0 -3.8l4.0 3.8" fill="none" stroke="#e4e4e4" stroke-width="1.5" stroke-linecap="round" stroke-linejoin="round"/><path d="M1139.4 344.2l4.0 3.8l4.0 -3.8" fill="none" stroke="#e4e4e4" stroke-width="1.5" stroke-linecap="round" stroke-linejoin="round"/><rect x="1153" y="332" width="31.4" height="18.6" fill="#454545"/><rect x="1185.4" y="332" width="14.6" height="18.6" fill="#494949"/><path d="M1189 338.2l4.0 4l4.0 -4" fill="none" stroke="#e4e4e4" stroke-width="1.6" stroke-linecap="round" stroke-linejoin="round"/><rect x="1044.4" y="363.2" width="15" height="15" fill="#6e6e6e" stroke="#8a8a8a" stroke-width="1.4"/><path d="M1046 364.8h4v4h-4zM1054 364.8h4v4h-4zM1050 368.8h4v4h-4zM1046 372.8h4v4h-4zM1054 372.8h4v4h-4z" fill="#7c7c7c"/><text x="1073.00" y="374.60" font-size="12" fill="#f4f4f4" style="font-family:'Liberation Sans','Noto Sans CJK SC',sans-serif">不透明度</text><path d="M1073 377.2H1120.6" stroke="#e8e8e8" stroke-width="1" stroke-dasharray="1 1" fill="none"/><rect x="1136" y="360.6" width="48.4" height="17.6" fill="#454545"/><rect x="1185.4" y="360.6" width="14.6" height="17.6" fill="#494949"/><text transform="translate(1138.4 373.6) scale(0.77 1)" font-size="13" fill="#f2f2f2" style="font-family:Liberation Mono,monospace;white-space:pre" >100%</text><path d="M1191.4 365.4l4.4 4.2l-4.4 4.2" fill="none" stroke="#e4e4e4" stroke-width="1.6" stroke-linecap="round" stroke-linejoin="round"/><text x="1050" y="408.6" font-size="14.5" fill="#cdcdcd" style="font-family:Liberation Sans,sans-serif;font-style:italic">fx</text><circle cx="1063" cy="408" r="0.9" fill="#cdcdcd"/><circle cx="1251.2" cy="427.4" r="1.75" fill="#c8c8c8"/><circle cx="1256.6000000000001" cy="427.4" r="1.75" fill="#c8c8c8"/><circle cx="1262.0" cy="427.4" r="1.75" fill="#c8c8c8"/><rect x="1043.8" y="473.8" width="198" height="16.8" fill="#494949"/><rect x="1242.6" y="473.8" width="20.4" height="16.8" fill="#4c4c4c"/><circle cx="1049.6" cy="480.8" r="3.5" fill="none" stroke="#cfcfcf" stroke-width="1.3"/><path d="M1052.2 483.6L1055.6 487" stroke="#cfcfcf" stroke-width="1.5"/><path d="M1056.4 480.6l3.3 3.2l3.3 -3.2" fill="none" stroke="#cfcfcf" stroke-width="1.2" stroke-linecap="round" stroke-linejoin="round"/><text transform="translate(1070 486.8) scale(0.77 1)" font-size="13" fill="#f2f2f2" style="font-family:Liberation Mono,monospace;white-space:pre" >Times New Roman</text><path d="M1249 480.2l4.0 4l4.0 -4" fill="none" stroke="#e4e4e4" stroke-width="1.6" stroke-linecap="round" stroke-linejoin="round"/><rect x="1043.8" y="497.6" width="219.2" height="21.2" fill="#494949"/><text transform="translate(1050 512.6) scale(0.77 1)" font-size="13" fill="#f2f2f2" style="font-family:Liberation Mono,monospace;white-space:pre" >Regular</text><path d="M1249 506.4l4.0 4l4.0 -4" fill="none" stroke="#e4e4e4" stroke-width="1.6" stroke-linecap="round" stroke-linejoin="round"/><text x="1043.6" y="540.4" font-size="10" fill="#d4d4d4" style="font-family:Liberation Serif,serif;font-weight:bold">T</text><text x="1049.2" y="540.4" font-size="18" fill="#d4d4d4" style="font-family:Liberation Serif,serif;font-weight:bold">T</text><path d="M1069 531.4l4.0 -3.8l4.0 3.8" fill="none" stroke="#e4e4e4" stroke-width="1.5" stroke-linecap="round" stroke-linejoin="round"/><path d="M1069 537.4l4.0 3.8l4.0 -3.8" fill="none" stroke="#e4e4e4" stroke-width="1.5" stroke-linecap="round" stroke-linejoin="round"/><rect x="1083" y="525" width="43" height="17" fill="#454545"/><rect x="1127" y="525" width="16" height="17" fill="#494949"/><text transform="translate(1086.4 537.6) scale(0.77 1)" font-size="13" fill="#f2f2f2" style="font-family:Liberation Mono,monospace;white-space:pre" >10 pt</text><path d="M1131.4 532l4.0 4l4.0 -4" fill="none" stroke="#e4e4e4" stroke-width="1.6" stroke-linecap="round" stroke-linejoin="round"/><text x="1166.6" y="532.4" font-size="9.5" fill="#d4d4d4" style="font-family:Liberation Serif,serif">A</text><text x="1165.2" y="542" font-size="11" fill="#d4d4d4" style="font-family:Liberation Serif,serif">A</text><path d="M1162.6 527v13.6M1160.6 529.4l2-2.6l2 2.6M1160.6 538.2l2 2.6l2-2.6" fill="none" stroke="#d4d4d4" stroke-width="1.1"/><path d="M1166 533.6h11" stroke="#d4d4d4" stroke-width="0.9"/><path d="M1166 543h11.4" stroke="#d4d4d4" stroke-width="0.9"/><path d="M1186.4 531.4l4.0 -3.8l4.0 3.8" fill="none" stroke="#e4e4e4" stroke-width="1.5" stroke-linecap="round" stroke-linejoin="round"/><path d="M1186.4 537.4l4.0 3.8l4.0 -3.8" fill="none" stroke="#e4e4e4" stroke-width="1.5" stroke-linecap="round" stroke-linejoin="round"/><rect x="1200" y="525" width="40.6" height="17" fill="#454545"/><rect x="1241.6" y="525" width="21.4" height="17" fill="#494949"/><text transform="translate(1204 537.6) scale(0.77 1)" font-size="13" fill="#f2f2f2" style="font-family:Liberation Mono,monospace;white-space:pre" >(12 pt</text><path d="M1249 531.6l4.0 4l4.0 -4" fill="none" stroke="#e4e4e4" stroke-width="1.6" stroke-linecap="round" stroke-linejoin="round"/><text x="1042.6" y="563.4" font-size="12.4" fill="#d4d4d4" style="font-family:Liberation Sans,sans-serif;letter-spacing:-1.3px">V/A</text><path d="M1052 566.4h9M1052 566.4l2.4-2M1052 566.4l2.4 2" fill="none" stroke="#d4d4d4" stroke-width="1.1"/><path d="M1069 557.1999999999999l4.0 -3.8l4.0 3.8" fill="none" stroke="#e4e4e4" stroke-width="1.5" stroke-linecap="round" stroke-linejoin="round"/><path d="M1069 563.2l4.0 3.8l4.0 -3.8" fill="none" stroke="#e4e4e4" stroke-width="1.5" stroke-linecap="round" stroke-linejoin="round"/><rect x="1083" y="551" width="43" height="17.2" fill="#454545"/><rect x="1127" y="551" width="16" height="17.2" fill="#494949"/><text x="1086.40" y="563.80" font-size="11.6" fill="#f4f4f4" style="font-family:'Liberation Sans','Noto Sans CJK SC',sans-serif">自动</text><path d="M1131.4 558l4.0 4l4.0 -4" fill="none" stroke="#e4e4e4" stroke-width="1.6" stroke-linecap="round" stroke-linejoin="round"/><rect x="1160.2" y="550.8" width="17.6" height="11.2" fill="#cfcfcf"/><text x="1160.6" y="561" font-size="11.6" fill="#4a4a4a" style="font-family:Liberation Sans,sans-serif;letter-spacing:-1px;font-weight:bold">VA</text><path d="M1160.6 565.4h17M1160.6 565.4l2.2-2M1160.6 565.4l2.2 2M1177.6 565.4l-2.2-2M1177.6 565.4l-2.2 2" fill="none" stroke="#d4d4d4" stroke-width="1.1"/><path d="M1186.4 557.1999999999999l4.0 -3.8l4.0 3.8" fill="none" stroke="#e4e4e4" stroke-width="1.5" stroke-linecap="round" stroke-linejoin="round"/><path d="M1186.4 563.2l4.0 3.8l4.0 -3.8" fill="none" stroke="#e4e4e4" stroke-width="1.5" stroke-linecap="round" stroke-linejoin="round"/><rect x="1200" y="551" width="40.6" height="17.2" fill="#454545"/><rect x="1241.6" y="551" width="21.4" height="17.2" fill="#494949"/><text transform="translate(1203 563.8) scale(0.77 1)" font-size="13" fill="#f2f2f2" style="font-family:Liberation Mono,monospace;white-space:pre" >0</text><path d="M1248.4 558l4.0 4l4.0 -4" fill="none" stroke="#e4e4e4" stroke-width="1.6" stroke-linecap="round" stroke-linejoin="round"/><circle cx="1251.2" cy="583.6" r="1.75" fill="#c8c8c8"/><circle cx="1256.6000000000001" cy="583.6" r="1.75" fill="#c8c8c8"/><circle cx="1262.0" cy="583.6" r="1.75" fill="#c8c8c8"/><rect x="1044" y="629" width="23.6" height="23" fill="#2b2b2b"/><path d="M1049.0 633.80h11M1049.0 637.10h15.4M1049.0 640.40h12M1049.0 643.70h15.4M1049.0 647.00h11" stroke="#fff" stroke-width="1.6" fill="none"/><path d="M1082.2 633.80h11M1080.0 637.10h15.4M1082.2 640.40h11M1080.0 643.70h15.4M1082.2 647.00h11" stroke="#bdbdbd" stroke-width="1.5" fill="none"/><path d="M1113.4 633.80h12M1110.0 637.10h15.4M1113.4 640.40h12M1110.0 643.70h15.4M1113.4 647.00h12" stroke="#bdbdbd" stroke-width="1.5" fill="none"/><path d="M1141.4 633.80h15.4M1141.4 637.10h15.4M1141.4 640.40h15.4M1141.4 643.70h15.4M1141.4 647.00h10" stroke="#bdbdbd" stroke-width="1.5" fill="none"/><path d="M1172.6 633.80h15.4M1172.6 637.10h15.4M1172.6 640.40h15.4M1172.6 643.70h15.4M1175.3 647.00h10" stroke="#bdbdbd" stroke-width="1.5" fill="none"/><path d="M1203.6 633.80h15.4M1203.6 637.10h15.4M1203.6 640.40h15.4M1203.6 643.70h15.4M1209.0 647.00h10" stroke="#bdbdbd" stroke-width="1.5" fill="none"/><path d="M1234.4 633.80h15.4M1234.4 637.10h15.4M1234.4 640.40h15.4M1234.4 643.70h15.4M1234.4 647.00h15.4" stroke="#bdbdbd" stroke-width="1.5" fill="none"/><circle cx="1251.2" cy="666.6" r="1.75" fill="#c8c8c8"/><circle cx="1256.6000000000001" cy="666.6" r="1.75" fill="#c8c8c8"/><circle cx="1262.0" cy="666.6" r="1.75" fill="#c8c8c8"/><circle cx="1051" cy="715" r="1.9" fill="#d0d0d0"/><path d="M1054.4 713.4h10.6M1054.4 716.6h9" stroke="#c6c6c6" stroke-width="1.4"/><path d="M1070 716.6l3.8 4l3.8 -4" fill="none" stroke="#e4e4e4" stroke-width="1.5" stroke-linecap="round" stroke-linejoin="round"/><text x="1086" y="718.6" font-size="7.5" fill="#d8d8d8" style="font-family:Liberation Sans,sans-serif;font-weight:bold">1</text><path d="M1091 713.4h10.6M1091 716.6h9" stroke="#c6c6c6" stroke-width="1.4"/><path d="M1106.4 716.6l3.8 4l3.8 -4" fill="none" stroke="#e4e4e4" stroke-width="1.5" stroke-linecap="round" stroke-linejoin="round"/><circle cx="1238.8" cy="511.2" r="28.6" fill="#b9c400" fill-opacity="0.5"/><path d="M1234.6 503.4c2 0 3.2.6 3.8 1.6c.6-1 1.8-1.6 3.8-1.6M1238.4 505v12.6M1234.6 519.2c2 0 3.2-.6 3.8-1.6c.6 1 1.8 1.6 3.8 1.6" fill="none" stroke="#e8e8c0" stroke-width="2.6" stroke-linecap="round"/><path d="M1234.6 503.4c2 0 3.2.6 3.8 1.6c.6-1 1.8-1.6 3.8-1.6M1238.4 505v12.6M1234.6 519.2c2 0 3.2-.6 3.8-1.6c.6 1 1.8 1.6 3.8 1.6" fill="none" stroke="#1c1c10" stroke-width="1.3" stroke-linecap="round"/><rect x="82" y="713" width="47" height="7" fill="#3f3f3f"/><rect x="150" y="713" width="52" height="7" fill="#3f3f3f"/><rect x="262" y="713" width="40" height="7" fill="#3f3f3f"/><clipPath id="sbc"><rect x="78" y="712" width="960" height="8"/></clipPath><g clip-path="url(#sbc)"><text transform="translate(85 724) scale(0.77 1)" font-size="13" fill="#e8e8e8" style="font-family:Liberation Mono,monospace;white-space:pre" >66.67%</text><text transform="translate(158 724.4) scale(0.77 1)" font-size="13" fill="#e8e8e8" style="font-family:Liberation Mono,monospace;white-space:pre" >0°</text><text transform="translate(268 724) scale(0.77 1)" font-size="13" fill="#e8e8e8" style="font-family:Liberation Mono,monospace;white-space:pre" >1</text></g><path d="M134 717.6l3.5 3.6l3.5 -3.6" fill="none" stroke="#c8c8c8" stroke-width="1.4" stroke-linecap="round" stroke-linejoin="round"/><path d="M207 717.6l3.5 3.6l3.5 -3.6" fill="none" stroke="#c8c8c8" stroke-width="1.4" stroke-linecap="round" stroke-linejoin="round"/><path d="M308 717.6l3.5 3.6l3.5 -3.6" fill="none" stroke="#c8c8c8" stroke-width="1.4" stroke-linecap="round" stroke-linejoin="round"/><path d="M236 718l4-3v6zM242 718l4-3v6zM336 715v6l4-3zM344 715v6l4-3zM348.6 715v6" fill="#8a8a8a" stroke="none"/><g clip-path="url(#sbc)"><text x="455.00" y="725.40" font-size="11.6" fill="#c8c8c8" style="font-family:'Liberation Sans','Noto Sans CJK SC',sans-serif">选择</text></g><path d="M571 714.6v7l5-3.5z" fill="#d0d0d0"/><path d="M594 714.4c-1.6 1.6-1.6 4 0 6" fill="none" stroke="#c8c8c8" stroke-width="1.2"/><rect x="786" y="713.4" width="23" height="6.6" fill="#5e5e5e"/></svg>



</body></html>
